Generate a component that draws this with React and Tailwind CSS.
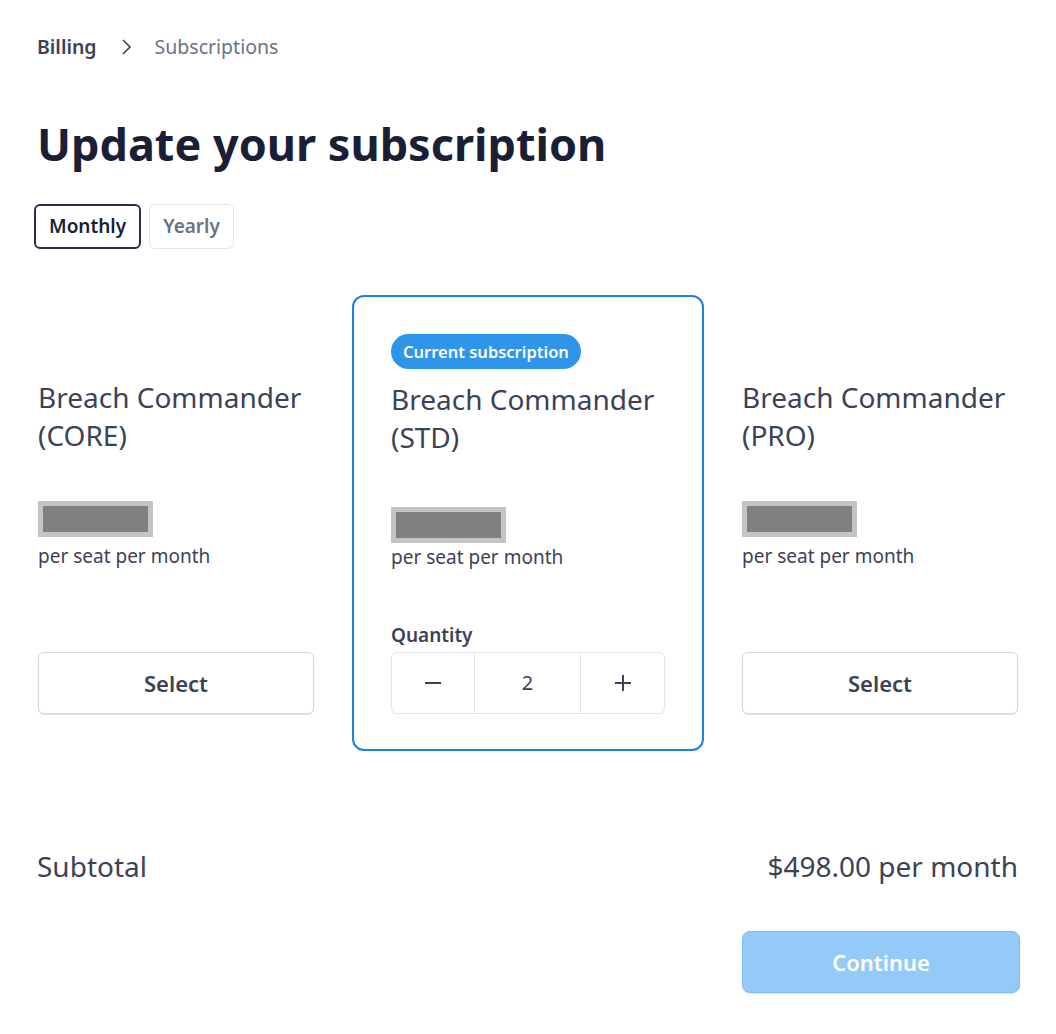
import React, { useState } from "react";

const plans = [
    { id: "core", name: "Breach Commander", tier: "(CORE)" },
    { id: "std", name: "Breach Commander", tier: "(STD)", current: true },
    { id: "pro", name: "Breach Commander", tier: "(PRO)" },
];

// grey redaction block standing in for the price
function PriceMask() {
    return (
        <div className="w-[115px] h-[36px] bg-[#c4c4c4] p-[5px]">
            <div className="w-full h-full bg-[#808080]" />
        </div>
    );
}

function Stepper({ value, onChange }) {
    return (
        <div className="flex h-[62px] w-full rounded-md border border-[#e3e5e8] text-[#3c4257]">
            <button
                className="w-[83px] flex items-center justify-center border-r border-[#e3e5e8]"
                onClick={() => onChange(Math.max(1, value - 1))}
            >
                <svg width="18" height="18" viewBox="0 0 18 18" fill="none" stroke="currentColor" strokeWidth="2">
                    <path d="M1 9h16" />
                </svg>
            </button>
            <div className="flex-1 flex items-center justify-center text-[20px] border-r border-[#e3e5e8]">{value}</div>
            <button
                className="w-[83px] flex items-center justify-center"
                onClick={() => onChange(value + 1)}
            >
                <svg width="18" height="18" viewBox="0 0 18 18" fill="none" stroke="currentColor" strokeWidth="2">
                    <path d="M1 9h16M9 1v16" />
                </svg>
            </button>
        </div>
    );
}

function PlanColumn({ plan, qty, setQty }) {
    if (plan.current) {
        return (
            <div className="rounded-xl border-2 border-[#1a82e2] px-[37px] pt-[37px] pb-[35px]">
                <span className="inline-block rounded-full bg-[#2e95eb] px-3 py-[6px] text-[16.5px] font-semibold leading-[23px] text-white">
                    Current subscription
                </span>
                <h2 className="mt-[11px] text-[28px] leading-[38px] text-[#3c4257]">
                    {plan.name}
                    <br />
                    {plan.tier}
                </h2>
                <div className="mt-[51px]">
                    <PriceMask />
                </div>
                <p className="mt-[1px] text-[19px] leading-[26px] text-[#3c4257]">per seat per month</p>
                <p className="mt-[52px] text-[19px] font-semibold leading-[26px] text-[#3c4257]">Quantity</p>
                <div className="mt-[4px]">
                    <Stepper value={qty} onChange={setQty} />
                </div>
            </div>
        );
    }

    return (
        <div className="px-[38px] pt-[83px]">
            <h2 className="text-[28px] leading-[38px] text-[#3c4257]">
                {plan.name}
                <br />
                {plan.tier}
            </h2>
            <div className="mt-[47px]">
                <PriceMask />
            </div>
            <p className="mt-[6px] text-[19px] leading-[26px] text-[#3c4257]">per seat per month</p>
            <button className="mt-[83px] h-[62px] w-full rounded-md border border-[#d5d9de] bg-white text-[22px] font-semibold text-[#3c4257] shadow-[0_1px_1px_rgba(0,0,0,0.12)]">
                Select
            </button>
        </div>
    );
}

export default function App() {
    const [period, setPeriod] = useState("monthly");
    const [qty, setQty] = useState(2);

    return (
        <div className="min-h-screen bg-white font-['Noto_Sans',sans-serif] text-[#3c4257]">
            {/* Breadcrumb */}
            <div className="flex items-center px-[37px] pt-[34px] text-[19.5px] leading-[26px]">
                <span className="font-semibold text-[#3c4257]">Billing</span>
                <svg className="mx-[22px]" width="14" height="16" viewBox="0 0 14 16" fill="none" stroke="#3c4257" strokeWidth="1.6">
                    <path d="M4 1l7 7-7 7" />
                </svg>
                <span className="text-[#697386]">Subscriptions</span>
            </div>

            {/* Title */}
            <h1 className="px-[37px] mt-[56px] text-[45px] font-bold leading-[56px] text-[#1a1f36]">
                Update your subscription
            </h1>

            {/* Period toggle */}
            <div className="flex gap-2 px-[34px] mt-[32px]">
                <button
                    onClick={() => setPeriod("monthly")}
                    className={period === "monthly"
                        ? "h-[45px] rounded-md border-2 border-[#2a2f45] px-[13px] text-[19px] font-semibold text-[#1a1f36]"
                        : "h-[45px] rounded-md border border-[#e3e5e8] px-[13px] text-[19px] font-semibold text-[#697386]"}
                >
                    Monthly
                </button>
                <button
                    onClick={() => setPeriod("yearly")}
                    className={period === "yearly"
                        ? "h-[45px] rounded-md border-2 border-[#2a2f45] px-[13px] text-[19px] font-semibold text-[#1a1f36]"
                        : "h-[45px] rounded-md border border-[#e3e5e8] px-[13px] text-[19px] font-semibold text-[#697386]"}
                >
                    Yearly
                </button>
            </div>

            {/* Plans */}
            <div className="grid grid-cols-3 mt-[46px]">
                {plans.map((p) => (
                    <PlanColumn key={p.id} plan={p} qty={qty} setQty={setQty} />
                ))}
            </div>

            {/* Subtotal */}
            <div className="flex items-center justify-between px-[37px] mt-[97px] text-[28px] leading-[36px]">
                <span>Subtotal</span>
                <span className="pr-[1px]">$498.00 per month</span>
            </div>

            <div className="flex justify-end px-[36px] mt-[47px]">
                <button className="h-[62px] w-[278px] rounded-lg border border-[#7fbaf0] bg-[#94caf7] text-[22px] font-semibold text-white shadow-[0_1px_2px_rgba(0,0,0,0.1)]">
                    Continue
                </button>
            </div>
        </div>
    );
}
